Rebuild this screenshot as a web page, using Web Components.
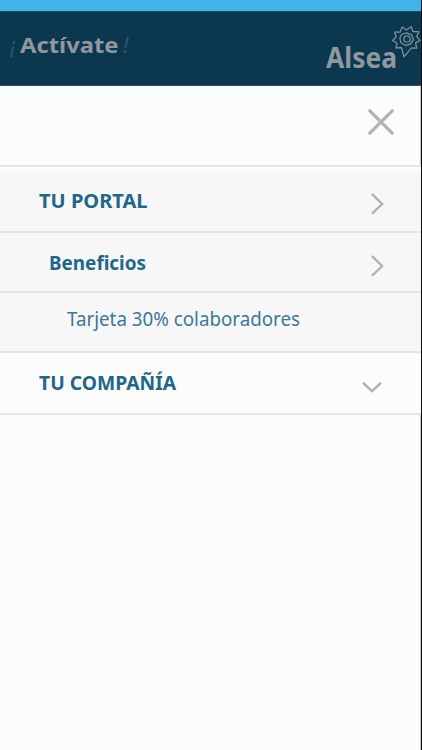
<!DOCTYPE html>
<html lang="es"><head><meta charset="utf-8"><title>Menú</title>
<style>body{margin:0;background:#fcfcfc;overflow:hidden}</style></head>
<body><menu-page></menu-page>
<script>
const define=(name,html,init)=>customElements.define(name,class extends HTMLElement{
  constructor(){super();this.attachShadow({mode:'open'}).innerHTML=html}
  connectedCallback(){if(init)init(this,this.shadowRoot)}
});

// Text scaled horizontally to the width given in its attribute
define('fit-text',`<style>:host{display:block;white-space:nowrap;line-height:24px}span{display:inline-block;transform-origin:0 50%}</style><span><slot></slot></span>`,
(el,root)=>{const s=root.querySelector('span');s.style.transform=`scaleX(${el.getAttribute('width')/s.getBoundingClientRect().width})`});

define('icon-glyph',`<style>:host{display:block}svg{display:block;fill:none;stroke:#b1b1b1;stroke-width:2.3;stroke-linecap:round}</style><svg></svg>`,
(el,root)=>{
  const k={
    close:[26,26,'<path d="M1.8 1.8 24.2 24.2M24.2 1.8 1.8 24.2" stroke-width="3.2" stroke="#b2b2b2"/>'],
    right:[13,22,'<path d="M1.6 1.6 11.2 11 1.6 20.2"/>'],
    down:[20,12,'<path d="M1.6 2.4 10 10.2 18.4 2.4"/>']
  }[el.getAttribute('name')];
  const s=root.querySelector('svg');
  s.setAttribute('width',k[0]);s.setAttribute('height',k[1]);s.innerHTML=k[2];
});

define('brand-bar',`<style>
:host{display:flex;justify-content:space-between;height:75px;background:#0b374f;border-top:11px solid #41b3e6;color:#8f979f;font-family:"Noto Sans",sans-serif;font-weight:700;box-shadow:inset 0 1px #174d67,inset 0 -1px #2c5166}
.slogan{display:flex;padding:22px 0 0 10px;font-size:21px}
.mark{font:italic 400 21px/24px "Noto Sans",sans-serif;color:#2f566b;width:10px}
.mark.end{margin-left:5px}
.slogan fit-text{width:98px}
.logo{display:flex;padding-top:14px}
.logo fit-text{padding-top:20px;width:70px;font-size:28px}
svg{display:block;margin-left:-5px}
</style><div class="slogan"><span class="mark">¡</span><fit-text width="98.5">Actívate</fit-text><span class="mark end">!</span></div>
<div class="logo"><fit-text width="71">Alsea</fit-text><svg width="30" height="34" viewBox="391 25 30 34" fill="none" stroke="#7b8f9c" stroke-width="1.3" stroke-linejoin="round"><path d="M404 56.8 401.5 47.5 396 48 397 43.2 392.6 40.5 396.2 37 394.7 32 400 32.2 402.2 27 406.4 30 411.3 26.7 413 31.6 418.8 31.7 416.7 36.5 420.2 40.4 415.6 42.8 416.7 48.2 411.5 47.8Z"/><path d="M401.5 34.5 406.5 32.8 411.8 35 413.4 39.7 410.5 44.2 405.5 45.5 401 42.8 399.8 38.2Z"/><circle cx="407" cy="39" r="3.2"/></svg></div>`);

define('close-bar',`<style>:host{display:flex;justify-content:flex-end;box-sizing:border-box;height:81px;padding:23px 27px 0 0;border-bottom:2px solid #dfe5ec}</style><icon-glyph name="close"></icon-glyph>`);

define('menu-row',`<style>
:host{display:flex;justify-content:space-between;box-sizing:border-box;border-bottom:2px solid #e1e6eb;background:#f7f7f7;color:#226789;font:700 19.5px "Noto Sans",sans-serif}
:host([first]){background:linear-gradient(#fcfcfc,#fcfcfc 3px,#f7f7f7 6px)}
:host([light]){font-weight:400;color:#3d7899}
:host([open]){background:#fcfcfc}
</style><slot></slot><slot name="icon"></slot>`);

define('menu-page',`<style>
:host{display:block;box-sizing:border-box;width:422px;height:750px;border-right:1px solid #080a0c;background:#fcfcfc;box-shadow:inset -1px 0 #c8caca}
.r1{height:66px;padding:22px 37px 0 39px}.r1 icon-glyph{margin-top:4px}
.r2{height:60px;padding:18px 37px 0 48.5px;font-size:19px}.r2 icon-glyph{margin-top:4px}
.r3{height:60px;padding:14px 0 0 67px;font-size:19px}
.r4{height:62px;padding:18px 39px 0 39px}.r4 icon-glyph{margin-top:10px}
</style><brand-bar></brand-bar><close-bar></close-bar>
<menu-row class="r1" first><fit-text width="108.5">TU PORTAL</fit-text><icon-glyph slot="icon" name="right"></icon-glyph></menu-row>
<menu-row class="r2"><fit-text width="97">Beneficios</fit-text><icon-glyph slot="icon" name="right"></icon-glyph></menu-row>
<menu-row class="r3" light><fit-text width="233">Tarjeta 30% colaboradores</fit-text></menu-row>
<menu-row class="r4" open><fit-text width="137">TU COMPAÑÍA</fit-text><icon-glyph slot="icon" name="down"></icon-glyph></menu-row>`);
</script></body></html>
